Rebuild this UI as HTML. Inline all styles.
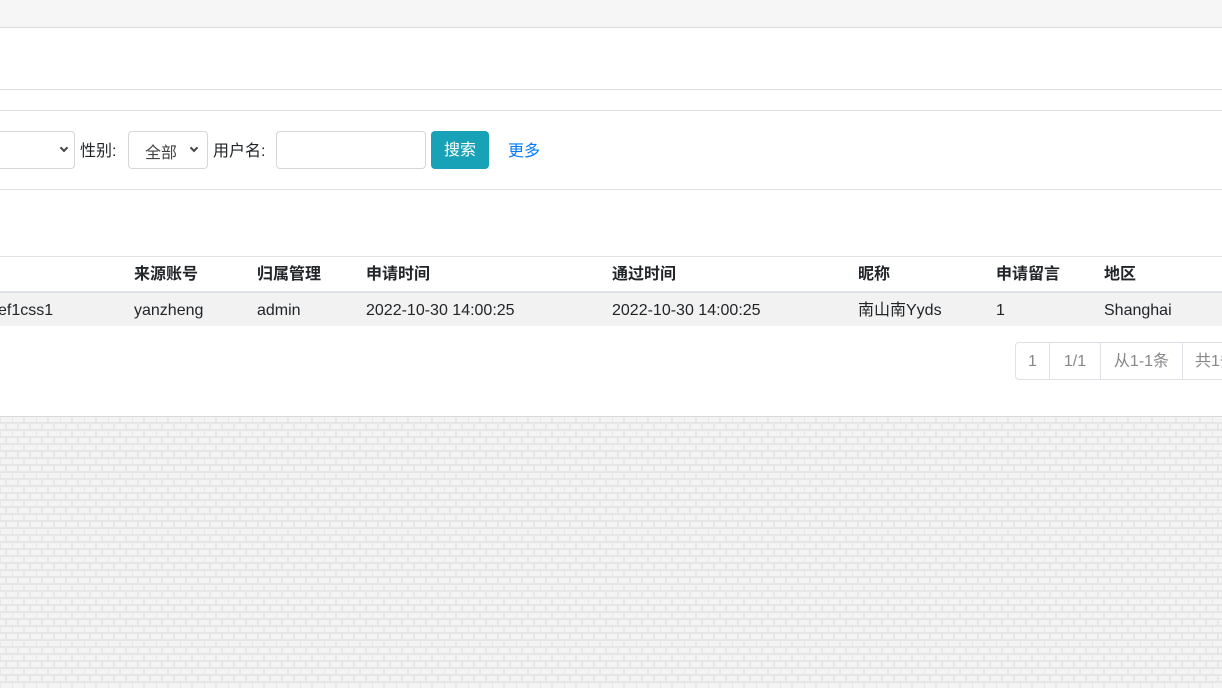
<!DOCTYPE html>
<html><head><meta charset="utf-8"><style>
*{box-sizing:border-box;margin:0;padding:0}
body{width:1222px;height:688px;overflow:hidden;font-family:"Liberation Sans","Noto Sans CJK SC",sans-serif;font-size:16px;line-height:20px;color:#212529;background:#fff;position:relative}
.top{position:absolute;left:0;top:0;width:1222px;height:28px;background:#f6f6f6;border-bottom:1px solid #dcdcdc}
.hl{position:absolute;left:0;width:1222px;height:1px;background:#e2e2e2}
.abs{position:absolute;white-space:nowrap;line-height:20px}
.sel{position:absolute;border:1px solid #d6d6d6;border-radius:4px;background:#fff;height:38px}
.chev{position:absolute;width:6px;height:6px;border-right:2px solid #444;border-bottom:2px solid #444;transform:rotate(45deg)}
.pg{position:absolute;top:342px;height:38px;border:1px solid #dee2e6;color:#888;font-size:16px;line-height:38px;text-align:center}
</style></head><body>
<div class="top"></div>
<div class="hl" style="top:89px;background:#dcdcdc"></div>
<div class="hl" style="top:110px"></div>
<div class="hl" style="top:189px"></div>
<div class="sel" style="left:-10px;top:131px;width:85px"></div><div class="chev" style="left:61px;top:145px"></div>
<div class="abs" style="left:80px;top:142px">性别:</div>
<div class="sel" style="left:128px;top:131px;width:80px"></div><div class="abs" style="left:145px;top:144px;color:#444">全部</div><div class="chev" style="left:191px;top:145px"></div>
<div class="abs" style="left:213px;top:142px">用户名:</div>
<div class="sel" style="left:276px;top:131px;width:150px"></div>
<div class="abs" style="left:431px;top:131px;width:58px;height:38px;background:#17a2b8;border-radius:4px;color:#fff;text-align:center;line-height:40px">搜索</div>
<div class="abs" style="left:508px;top:142px;color:#007bff">更多</div>
<div class="hl" style="top:256px"></div>
<div class="hl" style="top:291px;height:2px;background:#dee2e6"></div>
<div style="position:absolute;left:0;top:293px;width:1222px;height:33px;background:#f2f2f2"></div>
<div class="abs" style="top:265px;left:134px;font-weight:bold">来源账号</div>
<div class="abs" style="top:265px;left:257px;font-weight:bold">归属管理</div>
<div class="abs" style="top:265px;left:366px;font-weight:bold">申请时间</div>
<div class="abs" style="top:265px;left:612px;font-weight:bold">通过时间</div>
<div class="abs" style="top:265px;left:858px;font-weight:bold">昵称</div>
<div class="abs" style="top:265px;left:996px;font-weight:bold">申请留言</div>
<div class="abs" style="top:265px;left:1104px;font-weight:bold">地区</div>
<div class="abs" style="top:301px;left:-2px">ef1css1</div>
<div class="abs" style="top:301px;left:134px">yanzheng</div>
<div class="abs" style="top:301px;left:257px">admin</div>
<div class="abs" style="top:301px;left:366px">2022-10-30 14:00:25</div>
<div class="abs" style="top:301px;left:612px">2022-10-30 14:00:25</div>
<div class="abs" style="top:301px;left:858px">南山南Yyds</div>
<div class="abs" style="top:301px;left:996px">1</div>
<div class="abs" style="top:301px;left:1104px">Shanghai</div>
<div class="pg" style="left:1015px;width:35px;border-radius:4px 0 0 4px">1</div>
<div class="pg" style="left:1049px;width:52px">1/1</div>
<div class="pg" style="left:1100px;width:83px">从1-1条</div>
<div class="pg" style="left:1182px;width:60px;text-align:left;padding-left:12px">共1条</div>
<svg style="position:absolute;left:0;top:416px" width="1222" height="272">
<defs><pattern id="b" width="24" height="14" patternUnits="userSpaceOnUse">
<rect width="24" height="14" fill="#e6e6e6"/>
<rect x="1" y="1" width="11" height="5" fill="#f4f4f4"/><rect x="13" y="1" width="10" height="5" fill="#f4f4f4"/>
<rect x="0" y="8" width="5" height="5" fill="#f4f4f4"/><rect x="7" y="8" width="10" height="5" fill="#f4f4f4"/><rect x="19" y="8" width="5" height="5" fill="#f4f4f4"/>
</pattern></defs>
<rect width="1222" height="272" fill="url(#b)"/><rect width="1222" height="1" fill="#d8d8d8"/></svg>
</body></html>
